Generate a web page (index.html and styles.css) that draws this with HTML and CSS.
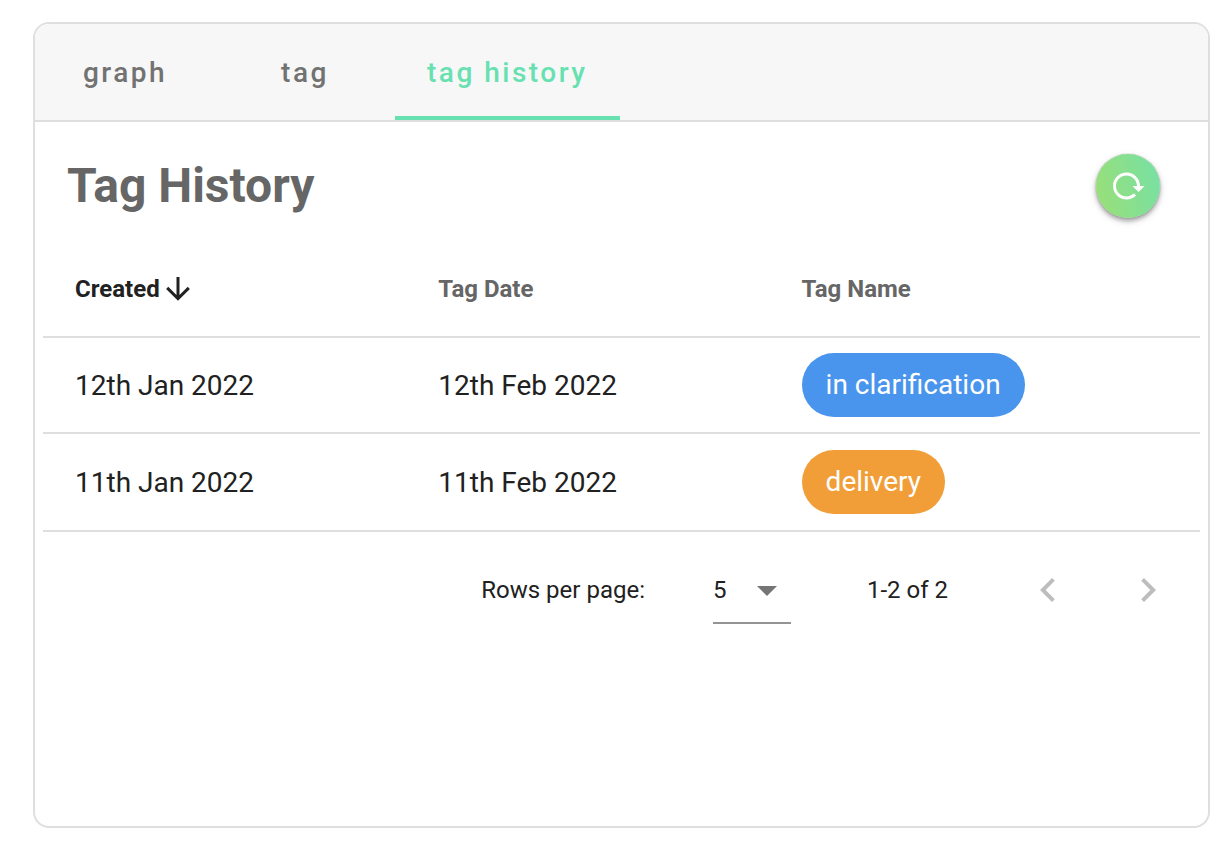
FILE: index.html
```html
<!DOCTYPE html>
<html lang="en">
<head>
<meta charset="utf-8">
<meta name="viewport" content="width=device-width, initial-scale=1">
<title>Tag History</title>
<link rel="stylesheet" href="styles.css">
</head>
<body>
<main class="card">
  <div class="tabs" role="tablist">
    <button class="tab" role="tab" type="button" aria-selected="false">graph</button>
    <button class="tab" role="tab" type="button" aria-selected="false">tag</button>
    <button class="tab tab-active" role="tab" type="button" aria-selected="true">tag history</button>
  </div>
  <header class="heading">
    <h1 class="title">Tag History</h1>
    <button class="reload" type="button" aria-label="Reload">
      <svg class="icon-small" viewBox="0 0 24 24" aria-hidden="true"><path d="M2 12C2 16.97 6.03 21 11 21C13.39 21 15.68 20.06 17.4 18.4L15.9 16.9C14.63 18.25 12.86 19 11 19C4.76 19 1.64 11.46 6.05 7.05C10.46 2.64 18 5.77 18 12H15L19 16H19.1L23 12H20C20 7.03 15.97 3 11 3C6.03 3 2 7.03 2 12Z"/></svg>
    </button>
  </header>
  <section class="content">
    <table class="table">
      <colgroup><col class="col-date"><col class="col-date"><col></colgroup>
      <thead>
        <tr>
          <th class="sorted" scope="col" aria-sort="descending"><span class="sort-label">Created<svg class="icon-small" viewBox="0 0 24 24" aria-hidden="true"><path d="M11,4H13V16L18.5,10.5L19.92,11.92L12,19.84L4.08,11.92L5.5,10.5L11,16V4Z"/></svg></span></th>
          <th scope="col">Tag Date</th>
          <th scope="col">Tag Name</th>
        </tr>
      </thead>
      <tbody>
        <tr><td>12th Jan 2022</td><td>12th Feb 2022</td><td><span class="chip chip-blue">in clarification</span></td></tr>
        <tr class="last-row"><td>11th Jan 2022</td><td>11th Feb 2022</td><td><span class="chip chip-orange">delivery</span></td></tr>
      </tbody>
    </table>
    <footer class="pager">
      <label class="rows-label" for="rows">Rows per page:</label>
      <div class="select">
        <select class="select-input" id="rows"><option>5</option><option>10</option><option>15</option></select>
        <svg class="select-arrow" viewBox="0 0 24 24" aria-hidden="true"><path d="M7,10L12,15L17,10H7Z"/></svg>
      </div>
      <span class="range">1-2 of 2</span>
      <div class="pages">
        <button class="page" type="button" aria-label="Previous page" disabled><svg class="icon" viewBox="0 0 24 24" aria-hidden="true"><path d="M15.41,16.58L10.83,12L15.41,7.41L14,6L8,12L14,18L15.41,16.58Z"/></svg></button>
        <button class="page" type="button" aria-label="Next page" disabled><svg class="icon" viewBox="0 0 24 24" aria-hidden="true"><path d="M8.59,16.58L13.17,12L8.59,7.41L10,6L16,12L10,18L8.59,16.58Z"/></svg></button>
      </div>
    </footer>
  </section>
</main>
</body>
</html>
```

FILE: styles.css
```css
* { box-sizing: border-box; }

body {
  display: flex;
  min-height: 100vh;
  margin: 0;
  padding: 22px 18px 30px 33px;
  background: #fff;
  color: #212121;
  font-family: Roboto, sans-serif;
  font-size: 28px;
}

button, select { font-family: inherit; }

svg { display: block; fill: currentColor; }

.card {
  flex: 1;
  min-width: 0;
  overflow: hidden;
  border: 2px solid #dfdfdf;
  border-radius: 16px;
}

.tabs {
  display: flex;
  height: 98px;
  border-bottom: 2px solid #dfdfdf;
  background: #f7f7f7;
}

.tab {
  min-width: 180px;
  padding: 4px 32px 0;
  border: 0;
  border-bottom: 4px solid transparent;
  background: none;
  color: #727272;
  font-size: 28px;
  font-weight: 500;
  letter-spacing: 0.089em;
}

.tab-active {
  border-bottom-color: #68e1b1;
  color: #68e1b1;
}

.heading {
  display: flex;
  align-items: center;
  justify-content: space-between;
  padding: 32px 48px 24px 32px;
}

.title {
  margin: 0;
  color: #666;
  font-size: 48px;
  font-weight: 700;
  line-height: 64px;
}

.reload {
  display: grid;
  place-items: center;
  width: 64px;
  height: 64px;
  padding: 0;
  border: 0;
  border-radius: 50%;
  background: linear-gradient(75deg, #9bdf76, #76e0a6);
  box-shadow: 0 0 1px rgba(0, 0, 0, 0.5), 0 3px 4px rgba(0, 0, 0, 0.3), 0 3px 10px rgba(0, 0, 0, 0.12);
  color: #fff;
}

.icon-small { width: 36px; height: 36px; }

.icon { width: 48px; height: 48px; }

.content { padding: 0 8px; }

.table {
  width: 100%;
  border-collapse: separate;
  border-spacing: 0;
  table-layout: fixed;
}

.col-date { width: 31.4%; }

th, td {
  height: 96px;
  padding: 0 32px;
  border-bottom: 2px solid #dfdfdf;
  text-align: left;
}

.last-row td { height: 98px; }

th {
  color: #666;
  font-size: 24px;
  font-weight: 700;
}

.sorted { color: #212121; }

.sort-label { display: flex; align-items: center; }

.chip {
  display: block;
  width: fit-content;
  padding: 0 24px;
  border-radius: 32px;
  color: #fff;
  line-height: 64px;
}

.chip-blue { background: #4994ec; }

.chip-orange { background: #f19e38; }

.pager {
  display: flex;
  align-items: center;
  justify-content: flex-end;
  height: 116px;
  padding-right: 28px;
  font-size: 24px;
}

.select {
  position: relative;
  width: 78px;
  margin: 0 76px 0 68px;
}

.select-input {
  display: block;
  width: 100%;
  height: 68px;
  padding: 2px 0 0;
  appearance: none;
  border: 0;
  border-bottom: 2px solid #949494;
  border-radius: 0;
  background: none;
  color: #212121;
  font-size: 24px;
}

.select-arrow {
  position: absolute;
  top: 10px;
  right: 0;
  width: 48px;
  height: 48px;
  color: #757575;
  pointer-events: none;
}

.pages {
  display: flex;
  gap: 52px;
  margin-left: 76px;
}

.page {
  padding: 0;
  border: 0;
  background: none;
  color: #bdbdbd;
}
```
